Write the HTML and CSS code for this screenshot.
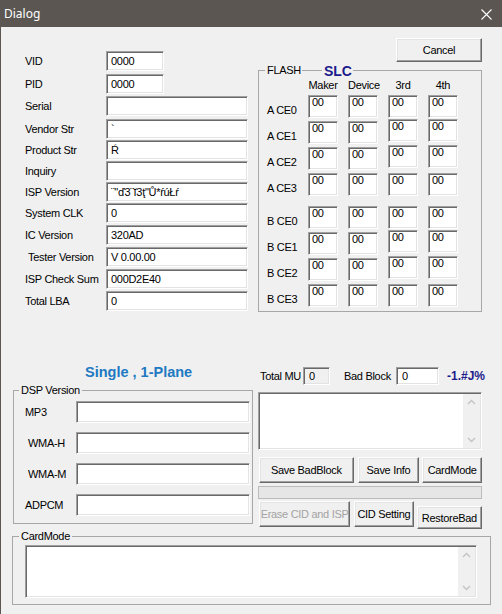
FILE: index.html
```html
<!DOCTYPE html>
<html lang="en">
<head>
    <meta charset="UTF-8">
    <title>Dialog</title>
    <link rel="stylesheet" href="styles.css">
</head>
<body>
    <div class="window">
        <div class="titlebar">
            <span class="title">Dialog</span>
            <svg class="close" width="11" height="11" viewBox="0 0 11 11">
                <path d="M0.5 0.5 L10.5 10.5 M10.5 0.5 L0.5 10.5" stroke="#fff" stroke-width="1.1" fill="none"/>
            </svg>
        </div>

        <div class="client">
            <div class="top">
                <!-- device info fields -->
                <div class="fields">
                    <span class="lbl">VID</span><div class="edit short">0000</div>
                    <span class="lbl">PID</span><div class="edit short">0000</div>
                    <span class="lbl">Serial</span><div class="edit"></div>
                    <span class="lbl">Vendor Str</span><div class="edit">`</div>
                    <span class="lbl">Product Str</span><div class="edit">Ŕ</div>
                    <span class="lbl">Inquiry</span><div class="edit"></div>
                    <span class="lbl">ISP Version</span><div class="edit">¨"ď3¨ĭ3ţ"Ů*ŕúŁŕ</div>
                    <span class="lbl">System CLK</span><div class="edit">0</div>
                    <span class="lbl">IC Version</span><div class="edit">320AD</div>
                    <span class="lbl indent">Tester Version</span><div class="edit">V 0.00.00</div>
                    <span class="lbl">ISP Check Sum</span><div class="edit">000D2E40</div>
                    <span class="lbl">Total LBA</span><div class="edit">0</div>
                </div>

                <div class="side">
                    <button class="btn cancel">Cancel</button>
                    <fieldset class="group flash">
                        <legend><span>FLASH</span><span class="rule"></span><span class="slc">SLC</span></legend>
                        <div class="chips">
                            <span></span><span class="hd">Maker</span><span class="hd">Device</span><span class="hd">3rd</span><span class="hd">4th</span>

                            <span class="ce">A CE0</span><div class="cell">00</div><div class="cell">00</div><div class="cell">00</div><div class="cell">00</div>
                            <span class="ce">A CE1</span><div class="cell">00</div><div class="cell">00</div><div class="cell up">00</div><div class="cell up">00</div>
                            <span class="ce">A CE2</span><div class="cell">00</div><div class="cell">00</div><div class="cell up">00</div><div class="cell up">00</div>
                            <span class="ce">A CE3</span><div class="cell">00</div><div class="cell">00</div><div class="cell">00</div><div class="cell">00</div>

                            <span class="spacer"></span>

                            <span class="ce">B CE0</span><div class="cell">00</div><div class="cell">00</div><div class="cell">00</div><div class="cell">00</div>
                            <span class="ce">B CE1</span><div class="cell">00</div><div class="cell">00</div><div class="cell up">00</div><div class="cell up">00</div>
                            <span class="ce">B CE2</span><div class="cell">00</div><div class="cell">00</div><div class="cell up">00</div><div class="cell up">00</div>
                            <span class="ce">B CE3</span><div class="cell">00</div><div class="cell">00</div><div class="cell">00</div><div class="cell">00</div>
                        </div>
                    </fieldset>
                </div>
            </div>

            <div class="middle">
                <div class="left-col">
                    <div class="mode">Single , 1-Plane</div>
                    <fieldset class="group dsp">
                        <legend>DSP Version</legend>
                        <div class="dsp-rows">
                            <span class="lbl">MP3</span><div class="edit"></div>
                            <span class="lbl indent">WMA-H</span><div class="edit"></div>
                            <span class="lbl indent">WMA-M</span><div class="edit"></div>
                            <span class="lbl">ADPCM</span><div class="edit"></div>
                        </div>
                    </fieldset>
                </div>

                <div class="right-col">
                    <div class="status">
                        <span class="lbl">Total MU</span>
                        <div class="edit readonly">0</div>
                        <span class="lbl">Bad Block</span>
                        <div class="edit">0</div>
                        <span class="rate">-1.#J%</span>
                    </div>

                    <div class="memo log">
                        <div class="memo-body"></div>
                        <div class="vscroll">
                            <svg width="17" height="17" viewBox="0 0 17 17"><polyline points="5,10 8.5,6.5 12,10" fill="none" stroke="#c2c2c2" stroke-width="1.3"/></svg>
                            <svg width="17" height="17" viewBox="0 0 17 17"><polyline points="5,7 8.5,10.5 12,7" fill="none" stroke="#c2c2c2" stroke-width="1.3"/></svg>
                        </div>
                    </div>

                    <div class="btn-row">
                        <button class="btn wide">Save BadBlock</button>
                        <button class="btn mid">Save Info</button>
                        <button class="btn narrow">CardMode</button>
                    </div>

                    <div class="progress"></div>

                    <div class="btn-row second">
                        <button class="btn wide" disabled>Erase CID and ISP</button>
                        <button class="btn mid">CID Setting</button>
                        <button class="btn restore">RestoreBad</button>
                    </div>
                </div>
            </div>

            <fieldset class="group cardmode">
                <legend>CardMode</legend>
                <div class="memo card">
                    <div class="memo-body"></div>
                    <div class="vscroll">
                        <svg width="17" height="17" viewBox="0 0 17 17"><polyline points="5,10 8.5,6.5 12,10" fill="none" stroke="#c2c2c2" stroke-width="1.3"/></svg>
                        <svg width="17" height="17" viewBox="0 0 17 17"><polyline points="5,7 8.5,10.5 12,7" fill="none" stroke="#c2c2c2" stroke-width="1.3"/></svg>
                    </div>
                </div>
            </fieldset>
        </div>
    </div>
</body>
</html>
```

FILE: styles.css
```css
* {
    box-sizing: border-box;
}
body {
    margin: 0;
    font-family: "Liberation Sans", Arial, sans-serif;
    font-size: 11px;
    letter-spacing: -0.3px;
    color: #000;
    background: #f0f0f0;
}
.window {
    width: 502px;
    height: 614px;
    background: #f0f0f0;
    border-left: 1px solid #5b5652;
    display: flex;
    flex-direction: column;
    overflow: hidden;
}

/* title bar */
.titlebar {
    height: 27px;
    flex: none;
    background: #5b5652;
    color: #fff;
    display: flex;
    align-items: center;
    justify-content: space-between;
    padding: 0 10px 0 3px;
}
.title {
    font-family: "Noto Sans", sans-serif;
    font-size: 12px;
    letter-spacing: 0;
}
.close {
    display: block;
    margin-top: 1px;
}

.client {
    flex: 1;
    padding: 11px 10px 0 11px;
    display: flex;
    flex-direction: column;
}

/* generic controls */
.lbl {
    white-space: nowrap;
}
.indent {
    padding-left: 3px;
}
.edit {
    height: 20px;
    width: 142px;
    background: #fff;
    border: 1px solid;
    border-color: #a0a0a0 #fff #fff #a0a0a0;
    box-shadow: inset 1px 1px 0 #696969, inset -1px -1px 0 #e3e3e3;
    padding: 0 4px;
    line-height: 18px;
    white-space: nowrap;
}
.edit.short {
    width: 58px;
}
.edit.readonly {
    background: #f0f0f0;
}
.btn {
    font-family: inherit;
    font-size: 11px;
    letter-spacing: -0.3px;
    color: #000;
    background: #f0f0f0;
    border: 1px solid;
    border-color: #fff #696969 #696969 #fff;
    box-shadow: inset -1px -1px 0 #a0a0a0, inset 1px 1px 0 #e3e3e3;
    padding: 0;
    border-radius: 0;
    white-space: nowrap;
}
.btn:disabled {
    color: #a3a3a3;
}
.group {
    margin: 0;
    border: 1px solid #a7a7a7;
    min-width: 0;
}
.group legend {
    line-height: 13px;
    padding: 0 2px;
}

/* upper part */
.top {
    display: grid;
    grid-template-columns: 246px 224px;
}
.fields {
    display: grid;
    grid-template-columns: 81px auto;
    grid-template-rows: 23px 22px 23px 21px 21px 21px 21px 22px 22px 22px 22px 20px;
    align-items: start;
    margin: 13px 0 0 13px;
}
.fields .lbl {
    line-height: 20px;
}
.side {
    display: flex;
    flex-direction: column;
}
.cancel {
    align-self: flex-end;
    width: 86px;
    height: 24px;
}
.flash {
    margin-top: 2px;
    padding: 2px 0 4px 8px;
}
.flash legend {
    margin-left: -2px;
    padding: 0 1px 0 2px;
}
.rule {
    display: inline-block;
    width: 20px;
    border-top: 1px solid #a7a7a7;
    margin-left: 1px;
    vertical-align: 3px;
}
.slc {
    font-size: 14px;
    font-weight: bold;
    letter-spacing: 0;
    color: #1c1c8c;
    line-height: 9px;
    margin-left: 2px;
    vertical-align: -2px;
}
.chips {
    display: grid;
    grid-template-columns: 31px 30px 30px 30px 30px;
    grid-template-rows: 13px 23px 23px 23px 23px 4px 23px 23px 23px 23px;
    column-gap: 10px;
    row-gap: 3px;
}
.chips .spacer {
    grid-column: 1 / -1;
}
.hd {
    text-align: center;
    line-height: 13px;
    white-space: nowrap;
}
.ce {
    line-height: 23px;
    padding-top: 4px;
    white-space: nowrap;
}
.cell {
    height: 23px;
    background: #fff;
    border: 1px solid;
    border-color: #a0a0a0 #fff #fff #a0a0a0;
    box-shadow: inset 1px 1px 0 #696969, inset -1px -1px 0 #e3e3e3;
    padding: 0 3px;
    line-height: 12px;
}
.cell.up {
    margin-top: -2px;
}

/* lower part */
.middle {
    display: grid;
    grid-template-columns: 246px 224px;
    align-items: start;
    margin-top: 52px;
}
.mode {
    font-size: 14.5px;
    font-weight: bold;
    letter-spacing: 0;
    line-height: 16px;
    color: #2079c2;
    padding-left: 73px;
    margin-bottom: 4px;
}
.dsp {
    width: 240px;
    margin-left: 1px;
    padding: 4px 2px 7px 11px;
}
.dsp legend {
    margin-left: -6px;
}
.dsp-rows {
    display: grid;
    grid-template-columns: 51px 174px;
    grid-auto-rows: 22px;
    row-gap: 9px;
    align-items: center;
}
.dsp-rows .edit {
    width: 174px;
    height: 22px;
}

.right-col {
    padding-top: 3px;
    display: flex;
    flex-direction: column;
}
.status {
    display: grid;
    grid-template-columns: 45px 27px 66px 43px auto;
    align-items: center;
    height: 18px;
}
.status .lbl:first-child {
    padding-left: 2px;
}
.status .lbl {
    padding-left: 14px;
}
.status .edit {
    width: auto;
    height: 18px;
    line-height: 16px;
    padding-left: 5px;
}
.rate {
    padding-left: 8px;
    font-size: 12px;
    font-weight: bold;
    letter-spacing: 0;
    color: #1c1c8c;
}

.memo {
    display: flex;
    background: #fff;
    border: 1px solid;
    border-color: #a0a0a0 #fff #fff #a0a0a0;
    box-shadow: inset 1px 1px 0 #696969, inset -1px -1px 0 #e3e3e3;
    padding: 1px;
}
.memo-body {
    flex: 1;
}
.vscroll {
    width: 17px;
    background: #f0f0f0;
    display: flex;
    flex-direction: column;
    justify-content: space-between;
}
.vscroll svg {
    display: block;
}
.log {
    margin-top: 7px;
    height: 58px;
}

.btn-row {
    display: flex;
    align-items: flex-start;
    margin-top: 7px;
    padding-left: 1px;
}
.btn-row .btn {
    height: 26px;
}
.btn.wide {
    width: 95px;
}
.btn.mid {
    width: 62px;
    margin-left: 4px;
}
.btn.narrow {
    width: 60px;
    margin-left: 3px;
}
.btn-row.second {
    margin-top: 2px;
}
.btn.restore {
    width: 68px;
    height: 23px;
    margin-left: 3px;
    margin-top: 5px;
}
.progress {
    margin-top: 3px;
    height: 13px;
    border: 1px solid #bcbcbc;
    background: #e6e6e6;
}

.cardmode {
    width: 479px;
    margin-top: 1px;
    padding: 2px 0 6px 12px;
}
.cardmode legend {
    margin-left: -6px;
}
.card {
    width: 452px;
    height: 53px;
}
```
